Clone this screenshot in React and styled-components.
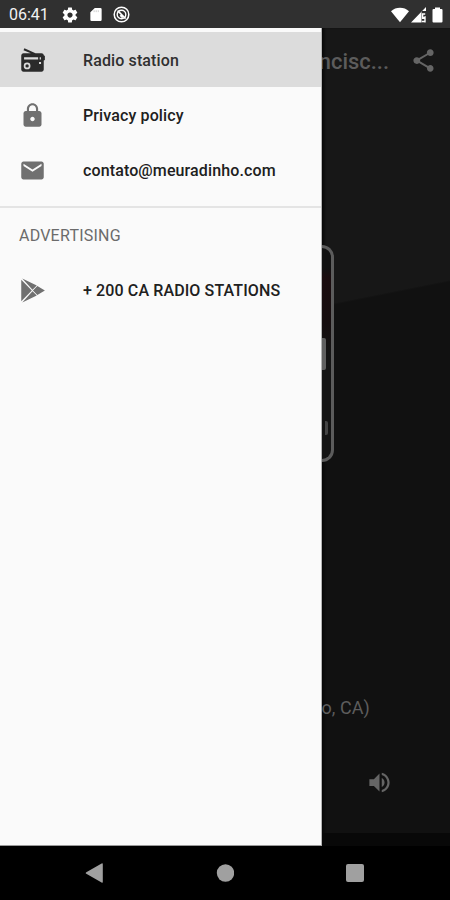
import React from 'react'
import styled, { createGlobalStyle } from 'styled-components'


const GlobalStyle = createGlobalStyle`
  * {
    box-sizing: border-box;
  }
  body {
    margin: 0;
    background: #000;
    font-family: Roboto, "Liberation Sans", sans-serif;
  }
`

const Screen = styled.div`
  width: 450px;
  height: 900px;
  display: flex;
  flex-direction: column;
  overflow: hidden;
`

const StatusBar = styled.header`
  height: 28px;
  flex: none;
  display: flex;
  align-items: center;
  padding: 1px 5px 0 9px;
  background: #303030;
  color: #fff;
  svg{
  display: block;
  flex: none;
  }
`

const Clock = styled.span`
  width: 52px;
  padding-top: 1px;
  font-size: 16px;
  line-height: 20px;
  color: #f2f2f2;
`

const StatusIcons = styled.div`
  display: flex;
  align-items: center;
  gap: ${props => props.$gap};
  margin-left: ${props => props.$right ? 'auto' : '0'};
`

const Body = styled.div`
  height: 818px;
  display: flex;
`

const Drawer = styled.nav`
  width: 322px;
  flex: none;
  padding-top: 4px;
  background: #fafafa;
  border-right: 1px solid #b4b4b4;
  border-bottom: 1px solid #999;
`

const Item = styled.div`
  height: 55px;
  display: flex;
  align-items: center;
  padding: 1px 0 0 19px;
  font-size: 16px;
  font-weight: 500;
  letter-spacing: 0.12px;
  color: ${props => props.$active ? '#303030' : '#202020'};
  background: ${props => props.$active ? '#dcdcdc' : 'transparent'};
  svg{
  margin-right: 37px;
  color: ${props => props.$active ? '#2b2b2b' : '#707070'};
  }
  span{
  padding-top: 1px;
  white-space: nowrap;
  }
`

const Section = styled.div`
  margin-top: 9px;
  border-top: 2px solid #e4e4e4;
`

const SectionTitle = styled.h2`
  margin: 0;
  height: 54px;
  padding-left: 19px;
  line-height: 56px;
  font-size: 16px;
  font-weight: 400;
  letter-spacing: 0.22px;
  color: #6b6b6b;
`

const Player = styled.main`
  flex: 1;
  min-width: 0;
  display: flex;
  flex-direction: column;
  overflow: hidden;
  background: linear-gradient(168.7deg, #171717 272px, #111 274px);
  box-shadow: inset 3px 0 3px -1px #080808;
  color: #656565;
`

const Toolbar = styled.div`
  height: 64px;
  flex: none;
  display: flex;
  align-items: center;
  justify-content: flex-end;
  padding-right: 13px;
  white-space: nowrap;
  svg{
  flex: none;
  margin-left: 21px;
  }
`

const Title = styled.h1`
  margin: 3px 0 0;
  font-size: 21.9px;
  line-height: 28px;
  font-weight: 500;
  color: #5c5c5c;
`

const Artwork = styled.div`
  width: 12px;
  height: 217px;
  flex: none;
  margin-top: 153px;
  padding-top: 22px;
  border: 3px solid #5c5c5c;
  border-left: 0;
  border-radius: 0 13px 13px 0;
  background: linear-gradient(#111 20px, #1a0c0e 30px, #150d0e 75px, #141414 105px);
`

const Knob = styled.div`
  width: ${props => props.$w}px;
  height: ${props => props.$h}px;
  margin: ${props => props.$m};
  background: ${props => props.$color};
  border-radius: 0 2px 2px 0;
`

const Station = styled.div`
  display: flex;
  justify-content: flex-end;
  margin-top: 235px;
  padding-right: 80px;
  font-size: 18px;
  line-height: 22px;
  letter-spacing: 0.1px;
  white-space: nowrap;
  color: #5d5d5d;
`

const Controls = styled.div`
  flex: 1;
  display: flex;
  justify-content: flex-end;
  padding: 50px 57px 0 0;
`

const AdBar = styled.div`
  height: 13px;
  flex: none;
  background: #080808;
`

const NavBar = styled.footer`
  height: 54px;
  flex: none;
  display: flex;
  align-items: center;
  justify-content: space-between;
  padding: 0 85px;
  background: #000;
  color: #a0a0a0;
  svg{
  display: block;
  }
`

const icons = {
  lock: 'M18 8h-1V6c0-2.76-2.24-5-5-5S7 3.24 7 6v2H6c-1.1 0-2 .9-2 2v10c0 1.1.9 2 2 2h12c1.1 0 2-.9 2-2V10c0-1.1-.9-2-2-2zm-6 9c-1.1 0-2-.9-2-2s.9-2 2-2 2 .9 2 2-.9 2-2 2zm3.1-9H8.9V6c0-1.71 1.39-3.1 3.1-3.1 1.71 0 3.1 1.39 3.1 3.1v2z',
  mail: 'M20 4H4c-1.1 0-1.99.9-1.99 2L2 18c0 1.1.9 2 2 2h16c1.1 0 2-.9 2-2V6c0-1.1-.9-2-2-2zm0 4l-8 5-8-5V6l8 5 8-5v2z',
  share: 'M18 16.08c-.76 0-1.44.3-1.96.77L8.91 12.7c.05-.23.09-.46.09-.7s-.04-.47-.09-.7l7.05-4.11c.54.5 1.25.81 2.04.81 1.66 0 3-1.34 3-3s-1.34-3-3-3-3 1.34-3 3c0 .24.04.47.09.7L8.04 9.81C7.5 9.31 6.79 9 6 9c-1.66 0-3 1.34-3 3s1.34 3 3 3c.79 0 1.5-.31 2.04-.81l7.12 4.16c-.05.21-.08.43-.08.65 0 1.61 1.31 2.92 2.92 2.92s2.92-1.31 2.92-2.92-1.31-2.92-2.92-2.92z',
  volume: 'M3 9v6h4l5 5V4L7 9H3zm13.5 3c0-1.77-1.02-3.29-2.5-4.03v8.05c1.48-.73 2.5-2.25 2.5-4.02zM14 3.23v2.06c2.89.86 5 3.54 5 6.71s-2.11 5.85-5 6.71v2.06c4.01-.91 7-4.49 7-8.77s-2.99-7.86-7-8.77z',
  gear: 'M19.43 12.98c.04-.32.07-.64.07-.98s-.03-.66-.07-.98l2.11-1.65c.19-.15.24-.42.12-.64l-2-3.46c-.12-.22-.39-.3-.61-.22l-2.49 1c-.52-.4-1.08-.73-1.69-.98l-.38-2.65C14.46 2.18 14.25 2 14 2h-4c-.25 0-.46.18-.49.42l-.38 2.65c-.61.25-1.17.59-1.69.98l-2.49-1c-.23-.09-.49 0-.61.22l-2 3.46c-.13.22-.07.49.12.64l2.11 1.65c-.04.32-.07.65-.07.98s.03.66.07.98l-2.11 1.65c-.19.15-.24.42-.12.64l2 3.46c.12.22.39.3.61.22l2.49-1c.52.4 1.08.73 1.69.98l.38 2.65c.03.24.24.42.49.42h4c.25 0 .46-.18.49-.42l.38-2.65c.61-.25 1.17-.59 1.69-.98l2.49 1c.23.09.49 0 .61-.22l2-3.46c.12-.22.07-.49-.12-.64l-2.11-1.65zM12 15.5c-1.93 0-3.5-1.57-3.5-3.5s1.57-3.5 3.5-3.5 3.5 1.57 3.5 3.5-1.57 3.5-3.5 3.5z',
}

const Icon = ({ name, size = 27 }) => (
  <svg width={size} height={size} viewBox="0 0 24 24" fill="currentColor">
    <path d={icons[name]} />
  </svg>
)

const RadioIcon = () => (
  <svg width="27" height="27" viewBox="0 0 24 24" fill="currentColor">
    <path fillRule="evenodd" d="M4.8 1.2l9.9 4.3H20c1.1 0 2 .8 2 1.9l1 .5v3.6l-1 .5V20c0 1.1-.9 2-2 2H4c-1.1 0-2-.9-2-2V7.5c0-1.1.9-2 2-2h6.5L4 2.8zM4.5 9v2.2h15V9zM7.2 13.8a3 3 0 1 0 0 6 3 3 0 0 0 0-6zM17.8 13.4v1.8h1.8v-1.8z" />
    <circle cx="7.2" cy="16.8" r="1.5" />
    <path d="M17 8h1.4v4H17z" />
  </svg>
)

const PlayIcon = () => (
  <svg width="27" height="27" viewBox="0 0 24 24" fill="currentColor">
    <path d="M2 2.4v19.2L11.4 12zM2.9 1.4L12 11.3l3.8-3.7zM2.9 22.6L12 12.7l3.8 3.7zM16.3 7.9L12.4 12l3.9 4.1L23 12z" />
  </svg>
)

export default function App() {
  return (
    <>
      <GlobalStyle />
      <Screen>
        <StatusBar>
          <Clock>06:41</Clock>
          <StatusIcons $gap="9px">
            <Icon name="gear" size={18} />
            <svg width="16" height="17" viewBox="0 0 17 17">
              <path d="M7.2 1.5h6a1.3 1.3 0 0 1 1.3 1.3v11.4a1.3 1.3 0 0 1-1.3 1.3H3.8a1.3 1.3 0 0 1-1.3-1.3V6z" fill="#fff" />
              <path d="M6.5 4v2M8.7 4v2M10.9 4v2" stroke="#bbb" strokeWidth=".8" />
            </svg>
            <svg width="17" height="17" viewBox="0 0 17 17" fill="none" stroke="#fff">
              <circle cx="8.5" cy="8.5" r="7.3" strokeWidth="1.5" />
              <circle cx="8.5" cy="8.5" r="4.3" strokeWidth="1.4" />
              <path d="M4.6 4.6l8 8M7.2 9.2l2.4 2.6" strokeWidth="1.5" />
            </svg>
          </StatusIcons>
          <StatusIcons $gap="2px" $right>
            <svg width="18" height="16" viewBox="0 0 18 16">
              <path d="M0 4.2a13.5 13.5 0 0 1 18 0L9 15.3z" fill="#fff" />
            </svg>
            <svg width="16" height="16" viewBox="0 0 16 16">
              <path d="M0 15.5L15 0v4h-4.5v11.5z" fill="#fff" />
              <path d="M14.2 7h-2.6v4l2.4-1v5.5M10.8 14.5h3.5" fill="none" stroke="#fff" strokeWidth="1.4" />
            </svg>
            <svg width="16" height="16" viewBox="0 0 16 16">
              <path d="M4.5 2H6V.5h5V2h1.5q1 0 1 1v11.5q0 1-1 1h-8q-1 0-1-1V3q0-1 1-1z" fill="#fff" />
            </svg>
          </StatusIcons>
        </StatusBar>
        <Body>
          <Drawer>
            <Item $active>
              <RadioIcon />
              <span>Radio station</span>
            </Item>
            <Item>
              <Icon name="lock" />
              <span>Privacy policy</span>
            </Item>
            <Item>
              <Icon name="mail" />
              <span>contato@meuradinho.com</span>
            </Item>
            <Section>
              <SectionTitle>ADVERTISING</SectionTitle>
              <Item>
                <PlayIcon />
                <span>+ 200 CA RADIO STATIONS</span>
              </Item>
            </Section>
          </Drawer>
          <Player>
            <Toolbar>
              <Title>ncisc...</Title>
              <Icon name="share" size={27} />
            </Toolbar>
            <Artwork>
              <Knob $w={4} $h={32} $m="68px 0 0" $color="#606060" />
              <Knob $w={3} $h={14} $m="51px 0 0 3px" $color="#444" />
            </Artwork>
            <Station>o, CA)</Station>
            <Controls>
              <Icon name="volume" size={27} />
            </Controls>
            <AdBar />
          </Player>
        </Body>
        <NavBar>
          <svg width="18" height="20" viewBox="0 0 18 20" fill="currentColor">
            <path d="M16.6.4q1.2-.7 1.2.8v17.6q0 1.4-1.2.7L1.3 10.8q-1.2-.8 0-1.6z" />
          </svg>
          <svg width="20" height="18" viewBox="0 0 20 18" fill="currentColor">
            <circle cx="11.5" cy="9" r="8.7" />
          </svg>
          <svg width="20" height="20" viewBox="0 0 20 20" fill="currentColor">
            <rect x="1" y="1" width="18" height="18" rx="2" />
          </svg>
        </NavBar>
      </Screen>
    </>
  )
}
